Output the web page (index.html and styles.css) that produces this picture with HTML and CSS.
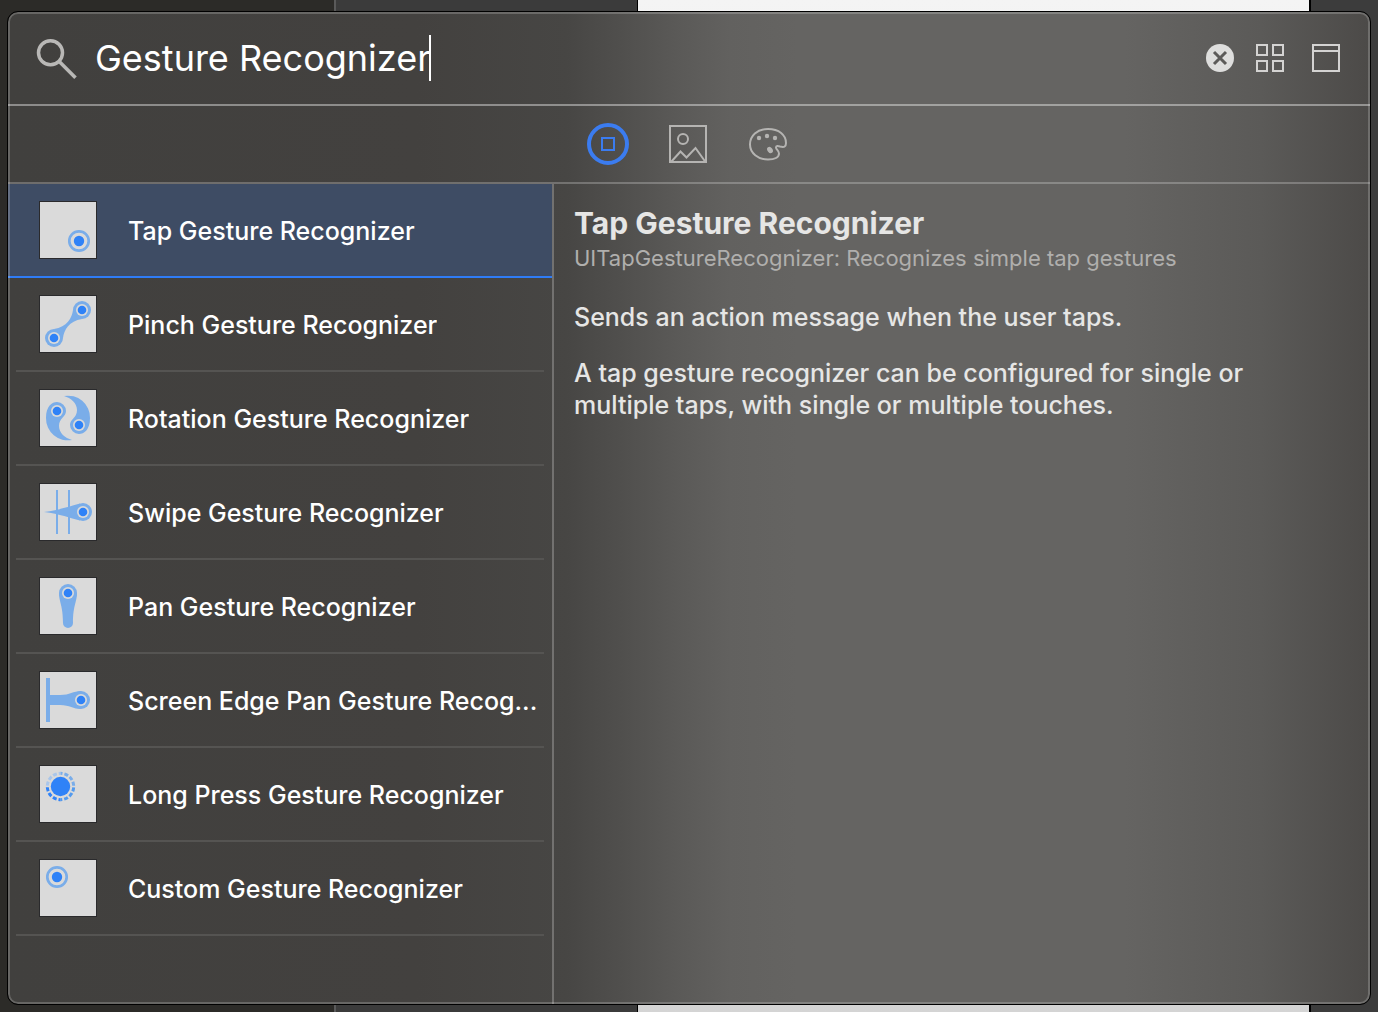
FILE: index.html
```html
<!DOCTYPE html>
<html lang="en">
<head>
<meta charset="utf-8">
<title>Object Library</title>
<link rel="stylesheet" href="styles.css">
</head>
<body>
<main class="library">
  <header class="search">
    <svg class="search-icon" width="44" height="44" viewBox="0 0 44 44" aria-hidden="true"><circle cx="15.500" cy="16.800" r="12"/><path d="M24 25.300 40.500 41.800"/></svg>
    <div class="field">
      <input class="query" type="text" aria-label="Search" value="Gesture Recognizer"><span class="caret"></span>
    </div>
    <button class="tool clear" aria-label="Clear"><svg width="28" height="28" viewBox="0 0 28 28"><circle cx="14" cy="14" r="14"/><path d="M8 8 20 20M20 8 8 20"/></svg></button>
    <button class="tool" aria-label="Grid view"><svg width="28" height="28" viewBox="0 0 28 28"><path d="M1 1h10v10H1zM17 1h10v10H17zM1 17h10v10H1zM17 17h10v10H17z"/></svg></button>
    <button class="tool window" aria-label="Show details"><svg width="28" height="28" viewBox="0 0 28 28"><path d="M1 1h26v26H1zM1 7h26"/></svg></button>
  </header>
  <nav class="tabs">
    <button class="tab active" aria-label="Objects"><svg width="42" height="42" viewBox="0 0 42 42"><circle cx="21" cy="21" r="19" stroke-width="4"/><path d="M15 15h12v12H15z"/></svg></button>
    <button class="tab" aria-label="Media"><svg width="42" height="42" viewBox="0 0 42 42"><path d="M3 3h36v36H3z"/><circle cx="16" cy="16" r="5"/><path d="M4 39 13.500 28.500 19.500 34.500 28.500 25 38.500 39"/></svg></button>
    <button class="tab" aria-label="Colors"><svg width="42" height="42" viewBox="0 0 42 42"><path d="M21 6C10 6 3 13 3 21.500C3 30 11 36.500 21 36.500C28 36.500 32 34 32 30.500C32 27.500 29 26.500 29 24.500C29 22.500 31 22.800 33 23.500C37 24.500 39 24 39 20C39 12 32 6 21 6Z"/><g class="fill"><circle cx="12" cy="15" r="2.200"/><circle cx="20" cy="13" r="2.200"/><circle cx="28" cy="15" r="2.200"/><ellipse cx="23" cy="27" rx="2.500" ry="3.500" transform="rotate(-35 23 27)"/></g></svg></button>
  </nav>
  <div class="content">
    <ul class="list">
      <li><button class="row selected"><svg class="thumb" viewBox="0 0 56 56"><circle class="ring" cx="39" cy="39" r="9.700"/><circle class="dot" cx="39" cy="39" r="5.200"/></svg><span class="name">Tap Gesture Recognizer</span></button></li>
      <li><button class="row"><svg class="thumb" viewBox="0 0 56 56"><g class="soft"><path d="M33 14C32 22 27 31 14 33L23 42C24 34 29 25 42 23Z"/><circle cx="42" cy="14" r="9"/><circle cx="14" cy="42" r="9"/></g><g class="hole"><circle cx="42" cy="14" r="6"/><circle cx="14" cy="42" r="6"/></g><g class="dot"><circle cx="42" cy="14" r="4.300"/><circle cx="14" cy="42" r="4.300"/></g></svg><span class="name">Pinch Gesture Recognizer</span></button></li>
      <li><button class="row"><svg class="thumb" viewBox="0 0 56 56"><g class="soft"><path d="M6 28C6 16 12 12 17 12A9 9 0 0 1 26 21C26 27 19 28 19 36C19 43 25 48 32 50A22 22 0 0 1 6 28Z"/><path transform="rotate(180 28 28)" d="M6 28C6 16 12 12 17 12A9 9 0 0 1 26 21C26 27 19 28 19 36C19 43 25 48 32 50A22 22 0 0 1 6 28Z"/></g><g class="hole"><circle cx="17" cy="21" r="6"/><circle cx="39" cy="35" r="6"/></g><g class="dot"><circle cx="17" cy="21" r="4.300"/><circle cx="39" cy="35" r="4.300"/></g></svg><span class="name">Rotation Gesture Recognizer</span></button></li>
      <li><button class="row"><svg class="thumb" viewBox="0 0 56 56"><g class="soft"><path d="M16 6h2v44h-2zM28 6h2v44h-2z"/><path d="M4 28C20 26 30 22 40 19.500L40 36.500C30 34 20 30 4 28Z"/><circle cx="43" cy="28" r="9"/></g><circle class="hole" cx="43" cy="28" r="6"/><circle class="dot" cx="43" cy="28" r="4.300"/></svg><span class="name">Swipe Gesture Recognizer</span></button></li>
      <li><button class="row"><svg class="thumb" viewBox="0 0 56 56"><g class="soft"><path d="M19 15C19 24 23 27 23 45A5 5 0 0 0 33 45C33 27 37 24 37 15Z"/><circle cx="28" cy="15" r="9"/></g><circle class="hole" cx="28" cy="15" r="6"/><circle class="dot" cx="28" cy="15" r="4.300"/></svg><span class="name">Pan Gesture Recognizer</span></button></li>
      <li><button class="row"><svg class="thumb" viewBox="0 0 56 56"><g class="soft"><path d="M6 6h4v44H6z"/><path d="M10 23H20C30 23 33 19 41 19V37C33 37 30 33 20 33H10Z"/><circle cx="41" cy="28" r="9"/></g><circle class="hole" cx="41" cy="28" r="6"/><circle class="dot" cx="41" cy="28" r="4.300"/></svg><span class="name">Screen Edge Pan Gesture Recog...</span></button></li>
      <li><button class="row"><svg class="thumb" viewBox="0 0 56 56"><circle class="dot" cx="20.500" cy="20.500" r="9.700"/><g class="dashes"><path stroke="#a9c6ea" stroke-dashoffset="-1" d="M7.300 20.500A13.200 13.200 0 0 1 20.500 7.300"/><path stroke="#7aade9" stroke-dashoffset="19.730" d="M20.500 7.300A13.200 13.200 0 0 1 33.700 20.500"/><path stroke="#539aee" stroke-dashoffset="40.470" d="M33.700 20.500A13.200 13.200 0 0 1 20.500 33.700"/><path stroke="#2f82f7" stroke-dashoffset="61.200" d="M20.500 33.700A13.200 13.200 0 0 1 7.300 20.500"/></g></svg><span class="name">Long Press Gesture Recognizer</span></button></li>
      <li><button class="row"><svg class="thumb" viewBox="0 0 56 56"><circle class="ring" cx="17" cy="17" r="9.700"/><circle class="dot" cx="17" cy="17" r="5.200"/></svg><span class="name">Custom Gesture Recognizer</span></button></li>
    </ul>
    <article class="detail">
      <h1 class="title">Tap Gesture Recognizer</h1>
      <p class="subtitle">UITapGestureRecognizer: Recognizes simple tap gestures</p>
      <p class="text">Sends an action message when the user taps.</p>
      <p class="text">A tap gesture recognizer can be configured for single or multiple taps, with single or multiple touches.</p>
    </article>
  </div>
</main>
</body>
</html>
```
FILE: styles.css
```css
* { box-sizing: border-box; }

body {
  margin: 0;
  min-height: 100vh;
  padding: 12px 8px 8px;
  display: flex;
  font-family: Inter, "Liberation Sans", sans-serif;
  color: #fff;
  background:
    linear-gradient(to right, #2c2b28 334px, #5a5a5a 334px 336px, #3b3b3b 336px 637px, #000 637px 638px, transparent 638px calc(100% - 69px), #000 calc(100% - 69px) calc(100% - 67px), #3c3c3c calc(100% - 67px)),
    linear-gradient(#f4f4f4, #d4d4d4);
}

button {
  border: 0;
  padding: 0;
  background: none;
  color: inherit;
  font: inherit;
}

svg { display: block; flex: none; }

.library {
  position: relative;
  flex: 1;
  min-width: 0;
  display: flex;
  flex-direction: column;
  border-radius: 10px;
  overflow: hidden;
  outline: 1px solid #000;
  background: linear-gradient(to right, #41403e 0, #43413f 30%, #474644 41%, #504f4d 45%, #5a5957 49%, #62615f 53%, #656462 58%, #656462 82%, #5b5a58 92%, #4c4a48 100%);
}

.library::after {
  content: "";
  position: absolute;
  inset: 0;
  border: 2px solid rgba(255, 255, 255, 0.2);
  border-radius: 10px;
  pointer-events: none;
}

.search {
  height: 94px;
  padding: 0 30px 0 27px;
  display: flex;
  align-items: center;
  border-bottom: 2px solid rgba(255, 255, 255, 0.4);
}

.search-icon { fill: none; stroke: #b9b8b6; stroke-width: 3.5; }

.field {
  flex: 1;
  margin-left: 16px;
  display: flex;
  align-items: center;
}

.query {
  field-sizing: content;
  height: 48px;
  padding: 0;
  border: 0;
  outline: 0;
  background: none;
  color: #fff;
  font: 400 36px/48px Inter, "Liberation Sans", sans-serif;
}

.caret { width: 2px; height: 46px; margin-left: -2px; background: #fff; }

.tool { margin-left: 22px; }
.tool.window { margin-left: 28px; }
.tool svg { fill: none; stroke: #d4d3d2; stroke-width: 2; }
.clear circle { fill: #dededd; stroke: none; }
.tool.clear path { stroke: #5c5b59; stroke-width: 3; }

.tabs {
  height: 78px;
  padding-right: 2px;
  display: flex;
  justify-content: center;
  align-items: center;
  gap: 38px;
  border-bottom: 2px solid rgba(255, 255, 255, 0.24);
}

.tab svg { fill: none; stroke: #b5b4b2; stroke-width: 2; }
.tab.active svg { stroke: #3b7cf0; }
.tab .fill { fill: #b5b4b2; stroke: none; }

.content {
  flex: 1;
  display: grid;
  grid-template-columns: 546px 1fr;
}

.list {
  margin: 0;
  padding: 0;
  list-style: none;
  min-width: 0;
  border-right: 2px solid rgba(255, 255, 255, 0.24);
}

.row {
  width: 100%;
  height: 94px;
  padding: 0 12px 2px 31px;
  display: flex;
  align-items: center;
  gap: 31px;
  text-align: left;
  background: linear-gradient(#555452, #555452) bottom / calc(100% - 16px) 2px no-repeat;
}

.row.selected { background: #3e4c64; border-bottom: 2px solid #2f7cf6; padding-bottom: 0; }

.thumb {
  width: 58px;
  height: 58px;
  border: 1px solid #2a2a2c;
  background: #dadada;
}

.thumb .ring { fill: none; stroke: #7aade9; stroke-width: 2.7; }
.thumb .dot { fill: #2f82f7; }
.thumb .soft { fill: #7aade9; }
.thumb .hole { fill: #dadada; }
.thumb .dashes { fill: none; stroke-width: 3; stroke-dasharray: 4 1.924; }

.name {
  min-width: 0;
  overflow: hidden;
  text-overflow: ellipsis;
  white-space: nowrap;
  padding-top: 2px;
  font-size: 25px;
  font-weight: 500;
  line-height: 32px;
}

.detail { padding: 20px 64px 20px 20px; color: #e6e6e5; }

.title { margin: 0; font-size: 30px; line-height: 38px; font-weight: 700; }
.subtitle { margin: 0 0 27px; font-size: 22px; line-height: 32px; color: #b0afad; }
.text { margin: 0 0 24px; font-size: 25px; font-weight: 500; line-height: 32px; }
```
